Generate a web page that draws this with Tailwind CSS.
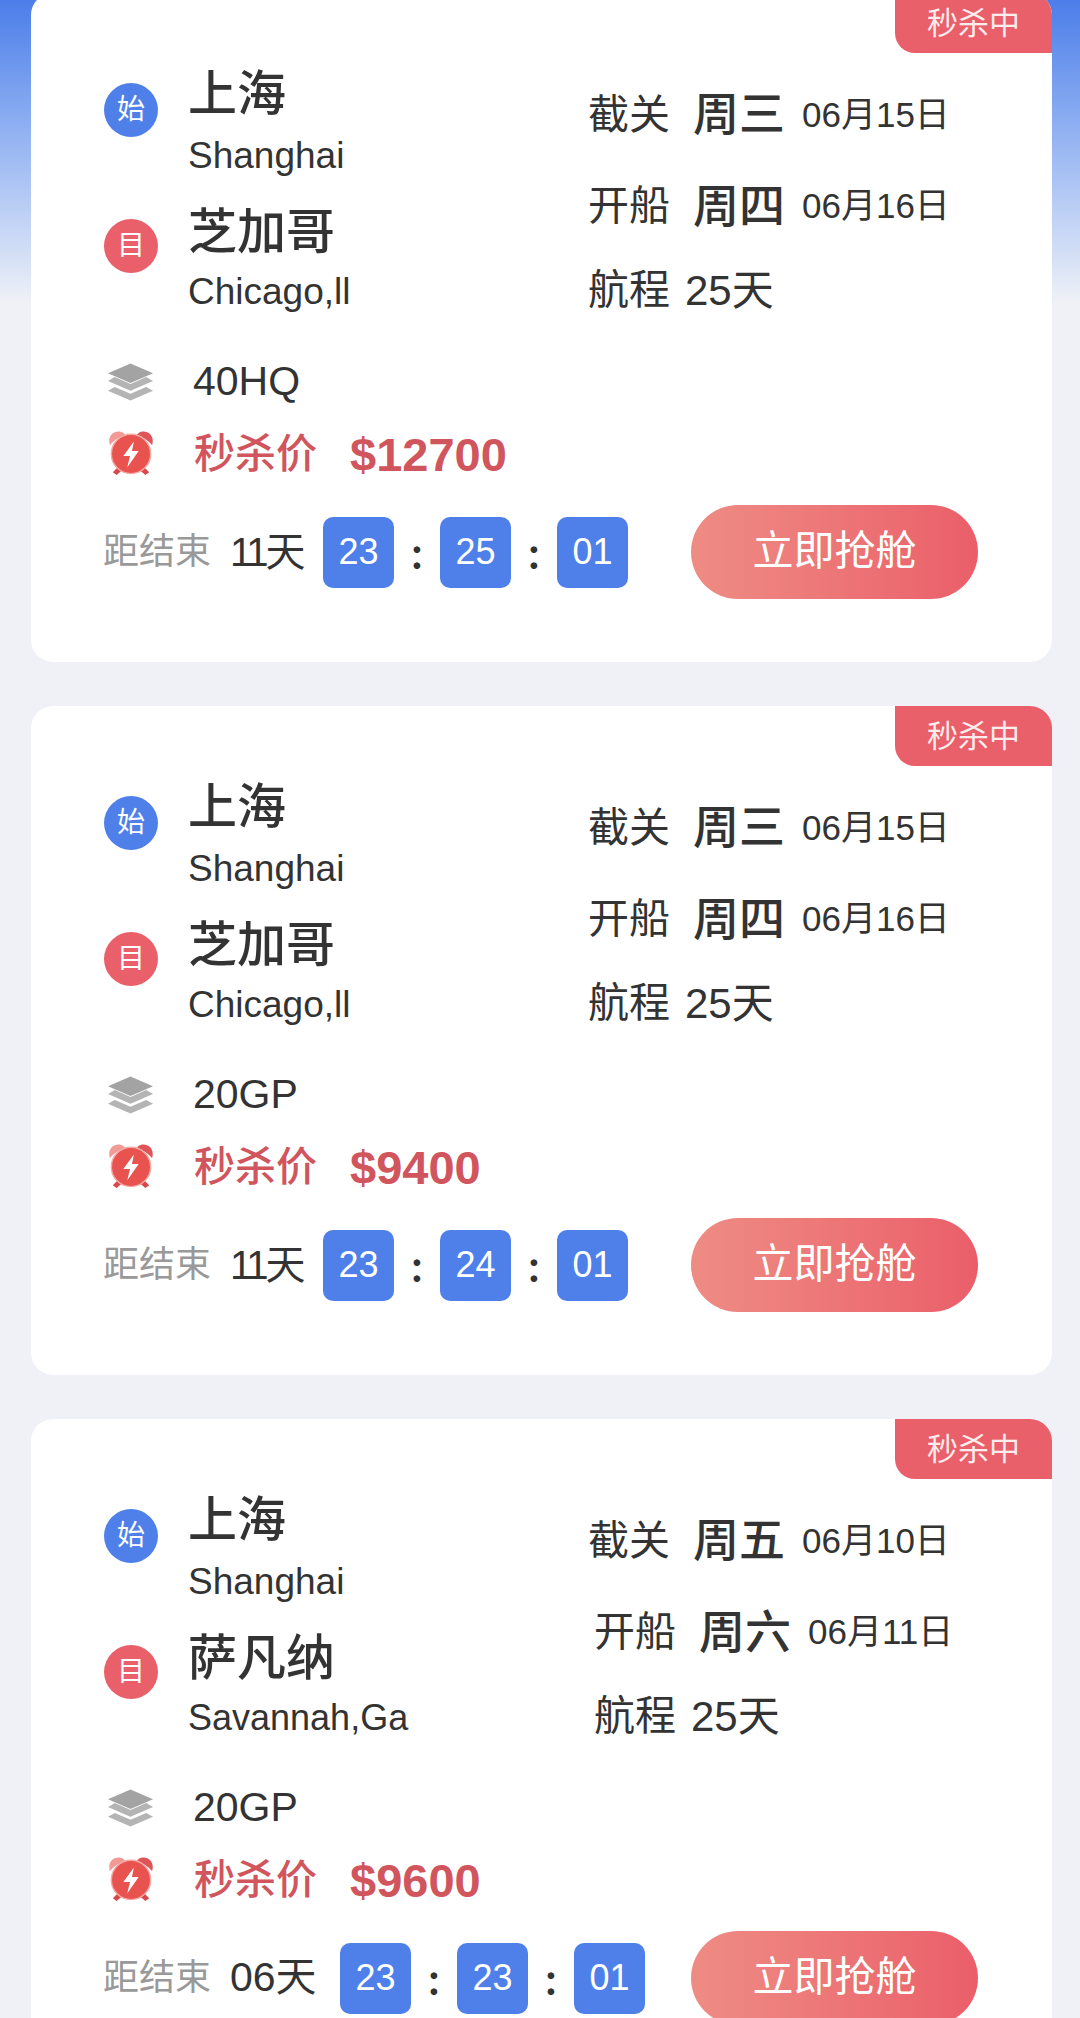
<!doctype html>
<html lang="zh-CN">

<head>
    <meta charset="utf-8">
    <meta name="viewport" content="width=device-width, initial-scale=1">
    <title>秒杀</title>
    <script src="https://cdn.jsdelivr.net/npm/@tailwindcss/browser@4"></script>
</head>

<body class="font-['Liberation_Sans','Noto_Sans_CJK_SC',sans-serif] text-[#333]">
    <svg class="hidden" xmlns="http://www.w3.org/2000/svg">
        <symbol id="layers" viewBox="0 0 48 38">
            <path d="M24 0 47 10 24 20 1 10Z" fill="#a3a3a3" />
            <path d="M8 14 24 21 40 14 47 18 24 28 1 18Z" fill="#b4b4b4" />
            <path d="M8 24 24 31 40 24 47 28 24 38 1 28Z" fill="#b4b4b4" />
        </symbol>
        <symbol id="clock" viewBox="0 0 48 48">
            <path d="M2 16C-1 6 6 0 14 2 17 3 18 5 18 6 10 8 6 11 2 16Z" fill="#f19a96" />
            <path d="M46 16C49 6 42 0 34 2 31 3 30 5 30 6 38 8 42 11 46 16Z" fill="#dd5558" />
            <path d="M11 38 5 44 9 47 16 41ZM37 38 43 44 39 47 32 41Z" fill="#d9474b" />
            <circle cx="24" cy="25" r="20.500" fill="#e8524f" stroke="#f5aaa5" stroke-width="1.500" />
            <path d="M27 12 16 27H23L20 39 32 22H25Z" fill="#fff" />
        </symbol>
    </svg>

    <div class="h-[2018px] overflow-hidden bg-linear-to-b from-[#4c7de9] to-[#eff1f6] to-[15%] pl-[31px] pr-[28px] pt-px">

        <!-- card 1 -->
        <div class="relative -mt-[8px] mb-[44px] h-[669px] rounded-[22px] bg-white pl-[73px] pr-[74px] pt-[71px]">
            <div class="absolute right-0 top-0 flex h-[60px] w-[157px] items-center justify-center rounded-bl-[20px] rounded-tr-[22px] bg-[#e95f6a] pt-[3px] text-[31px] text-[#fdecec]">秒杀中</div>
            <div class="flex">
                <div class="w-[484px]">
                    <div class="flex">
                        <div class="mt-[19px] mr-[30px] flex size-[54px] items-center justify-center rounded-full bg-[#4f80ea] text-[28px] text-white">始</div>
                        <div>
                            <div class="text-[49px] font-medium leading-[60px]">上海</div>
                            <div class="pt-[2px] text-[37px] leading-[60px]">Shanghai</div>
                        </div>
                    </div>
                    <div class="mt-[16px] flex">
                        <div class="mt-[17px] mr-[30px] flex size-[54px] items-center justify-center rounded-full bg-[#e95f6a] text-[28px] text-white">目</div>
                        <div>
                            <div class="text-[49px] font-medium leading-[60px]">芝加哥</div>
                            <div class="text-[37px] leading-[60px]">Chicago,ll</div>
                        </div>
                    </div>
                </div>
                <div class="pt-[20px]">
                    <div class="flex h-[60px] items-center">
                        <span class="mt-[3px] text-[41px]">截关</span>
                        <span class="ml-[23px] text-[46px] font-medium">周三</span>
                        <span class="ml-[17px] mt-[2px] text-[35px]">06月15日</span>
                    </div>
                    <div class="mt-[32px] flex h-[60px] items-center">
                        <span class="mt-[2px] text-[41px]">开船</span>
                        <span class="ml-[23px] text-[46px] font-medium">周四</span>
                        <span class="ml-[17px] text-[35px]">06月16日</span>
                    </div>
                    <div class="mt-[24px] flex h-[60px] items-center">
                        <span class="mt-[2px] text-[41px]">航程</span>
                        <span class="ml-[15px] text-[42px]">25天</span>
                    </div>
                </div>
            </div>
            <div class="mt-[30px] flex h-[60px] items-center">
                <svg class="ml-[3px] mr-[39px] h-[38px] w-[47px]"><use href="#layers" /></svg>
                <span class="text-[41px]">40HQ</span>
            </div>
            <div class="flex h-[84px] items-center pt-[2px]">
                <svg class="ml-[4px] mr-[40px] -mt-[4px] size-[46px]"><use href="#clock" /></svg>
                <span class="text-[41px] font-medium text-[#d0555d]">秒杀价</span>
                <span class="ml-[33px] text-[47px] font-bold text-[#d0555d]">$12700</span>
            </div>
            <div class="mt-[9px] -ml-px flex h-[94px] items-center">
                <span class="w-[127px] text-[36px] text-[#999]">距结束</span>
                <span class="w-[93px] text-[40px]"><span class="tracking-[-3px]">11</span>天</span>
                <div class="flex size-[71px] items-center justify-center rounded-[10px] bg-[#4f80ea] text-[36px] text-white">23</div>
                <div class="w-[46px] text-center font-['Lato'] text-[44px] font-bold">:</div>
                <div class="flex size-[71px] items-center justify-center rounded-[10px] bg-[#4f80ea] text-[36px] text-white">25</div>
                <div class="w-[46px] text-center font-['Lato'] text-[44px] font-bold">:</div>
                <div class="flex size-[71px] items-center justify-center rounded-[10px] bg-[#4f80ea] text-[36px] text-white">01</div>
                <div class="ml-auto flex h-[94px] w-[287px] items-center justify-center rounded-full bg-linear-to-r from-[#ee8c84] to-[#ea5e6a] text-[41px] text-white">立即抢舱</div>
            </div>
        </div>

        <!-- card 2 -->
        <div class="relative mb-[44px] h-[669px] rounded-[22px] bg-white pl-[73px] pr-[74px] pt-[71px]">
            <div class="absolute right-0 top-0 flex h-[60px] w-[157px] items-center justify-center rounded-bl-[20px] rounded-tr-[22px] bg-[#e95f6a] pt-[3px] text-[31px] text-[#fdecec]">秒杀中</div>
            <div class="flex">
                <div class="w-[484px]">
                    <div class="flex">
                        <div class="mt-[19px] mr-[30px] flex size-[54px] items-center justify-center rounded-full bg-[#4f80ea] text-[28px] text-white">始</div>
                        <div>
                            <div class="text-[49px] font-medium leading-[60px]">上海</div>
                            <div class="pt-[2px] text-[37px] leading-[60px]">Shanghai</div>
                        </div>
                    </div>
                    <div class="mt-[16px] flex">
                        <div class="mt-[17px] mr-[30px] flex size-[54px] items-center justify-center rounded-full bg-[#e95f6a] text-[28px] text-white">目</div>
                        <div>
                            <div class="text-[49px] font-medium leading-[60px]">芝加哥</div>
                            <div class="text-[37px] leading-[60px]">Chicago,ll</div>
                        </div>
                    </div>
                </div>
                <div class="pt-[20px]">
                    <div class="flex h-[60px] items-center">
                        <span class="mt-[3px] text-[41px]">截关</span>
                        <span class="ml-[23px] text-[46px] font-medium">周三</span>
                        <span class="ml-[17px] mt-[2px] text-[35px]">06月15日</span>
                    </div>
                    <div class="mt-[32px] flex h-[60px] items-center">
                        <span class="mt-[2px] text-[41px]">开船</span>
                        <span class="ml-[23px] text-[46px] font-medium">周四</span>
                        <span class="ml-[17px] text-[35px]">06月16日</span>
                    </div>
                    <div class="mt-[24px] flex h-[60px] items-center">
                        <span class="mt-[2px] text-[41px]">航程</span>
                        <span class="ml-[15px] text-[42px]">25天</span>
                    </div>
                </div>
            </div>
            <div class="mt-[30px] flex h-[60px] items-center">
                <svg class="ml-[3px] mr-[39px] h-[38px] w-[47px]"><use href="#layers" /></svg>
                <span class="text-[41px]">20GP</span>
            </div>
            <div class="flex h-[84px] items-center pt-[2px]">
                <svg class="ml-[4px] mr-[40px] -mt-[4px] size-[46px]"><use href="#clock" /></svg>
                <span class="text-[41px] font-medium text-[#d0555d]">秒杀价</span>
                <span class="ml-[33px] text-[47px] font-bold text-[#d0555d]">$9400</span>
            </div>
            <div class="mt-[9px] -ml-px flex h-[94px] items-center">
                <span class="w-[127px] text-[36px] text-[#999]">距结束</span>
                <span class="w-[93px] text-[40px]"><span class="tracking-[-3px]">11</span>天</span>
                <div class="flex size-[71px] items-center justify-center rounded-[10px] bg-[#4f80ea] text-[36px] text-white">23</div>
                <div class="w-[46px] text-center font-['Lato'] text-[44px] font-bold">:</div>
                <div class="flex size-[71px] items-center justify-center rounded-[10px] bg-[#4f80ea] text-[36px] text-white">24</div>
                <div class="w-[46px] text-center font-['Lato'] text-[44px] font-bold">:</div>
                <div class="flex size-[71px] items-center justify-center rounded-[10px] bg-[#4f80ea] text-[36px] text-white">01</div>
                <div class="ml-auto flex h-[94px] w-[287px] items-center justify-center rounded-full bg-linear-to-r from-[#ee8c84] to-[#ea5e6a] text-[41px] text-white">立即抢舱</div>
            </div>
        </div>

        <!-- card 3, runs off the bottom of the window -->
        <div class="relative h-[669px] rounded-[22px] bg-white pl-[73px] pr-[74px] pt-[71px]">
            <div class="absolute right-0 top-0 flex h-[60px] w-[157px] items-center justify-center rounded-bl-[20px] rounded-tr-[22px] bg-[#e95f6a] pt-[3px] text-[31px] text-[#fdecec]">秒杀中</div>
            <div class="flex">
                <div class="w-[484px]">
                    <div class="flex">
                        <div class="mt-[19px] mr-[30px] flex size-[54px] items-center justify-center rounded-full bg-[#4f80ea] text-[28px] text-white">始</div>
                        <div>
                            <div class="text-[49px] font-medium leading-[60px]">上海</div>
                            <div class="pt-[2px] text-[37px] leading-[60px]">Shanghai</div>
                        </div>
                    </div>
                    <div class="mt-[16px] flex">
                        <div class="mt-[17px] mr-[30px] flex size-[54px] items-center justify-center rounded-full bg-[#e95f6a] text-[28px] text-white">目</div>
                        <div>
                            <div class="text-[49px] font-medium leading-[60px]">萨凡纳</div>
                            <div class="text-[36px] leading-[60px]">Savannah,Ga</div>
                        </div>
                    </div>
                </div>
                <div class="pt-[20px]">
                    <div class="flex h-[60px] items-center">
                        <span class="mt-[3px] text-[41px]">截关</span>
                        <span class="ml-[23px] text-[46px] font-medium">周五</span>
                        <span class="ml-[17px] mt-[2px] text-[35px]">06月10日</span>
                    </div>
                    <div class="mt-[32px] flex h-[60px] items-center pl-[6px]">
                        <span class="mt-[2px] text-[41px]">开船</span>
                        <span class="ml-[23px] text-[46px] font-medium">周六</span>
                        <span class="ml-[17px] text-[35px]">06月11日</span>
                    </div>
                    <div class="mt-[24px] flex h-[60px] items-center pl-[6px]">
                        <span class="mt-[2px] text-[41px]">航程</span>
                        <span class="ml-[15px] text-[42px]">25天</span>
                    </div>
                </div>
            </div>
            <div class="mt-[30px] flex h-[60px] items-center">
                <svg class="ml-[3px] mr-[39px] h-[38px] w-[47px]"><use href="#layers" /></svg>
                <span class="text-[41px]">20GP</span>
            </div>
            <div class="flex h-[84px] items-center pt-[2px]">
                <svg class="ml-[4px] mr-[40px] -mt-[4px] size-[46px]"><use href="#clock" /></svg>
                <span class="text-[41px] font-medium text-[#d0555d]">秒杀价</span>
                <span class="ml-[33px] text-[47px] font-bold text-[#d0555d]">$9600</span>
            </div>
            <div class="mt-[9px] -ml-px flex h-[94px] items-center">
                <span class="w-[127px] text-[36px] text-[#999]">距结束</span>
                <span class="w-[110px] text-[41px]">06天</span>
                <div class="flex size-[71px] items-center justify-center rounded-[10px] bg-[#4f80ea] text-[36px] text-white">23</div>
                <div class="w-[46px] text-center font-['Lato'] text-[44px] font-bold">:</div>
                <div class="flex size-[71px] items-center justify-center rounded-[10px] bg-[#4f80ea] text-[36px] text-white">23</div>
                <div class="w-[46px] text-center font-['Lato'] text-[44px] font-bold">:</div>
                <div class="flex size-[71px] items-center justify-center rounded-[10px] bg-[#4f80ea] text-[36px] text-white">01</div>
                <div class="ml-auto flex h-[94px] w-[287px] items-center justify-center rounded-full bg-linear-to-r from-[#ee8c84] to-[#ea5e6a] text-[41px] text-white">立即抢舱</div>
            </div>
        </div>
    </div>
</body>

</html>
